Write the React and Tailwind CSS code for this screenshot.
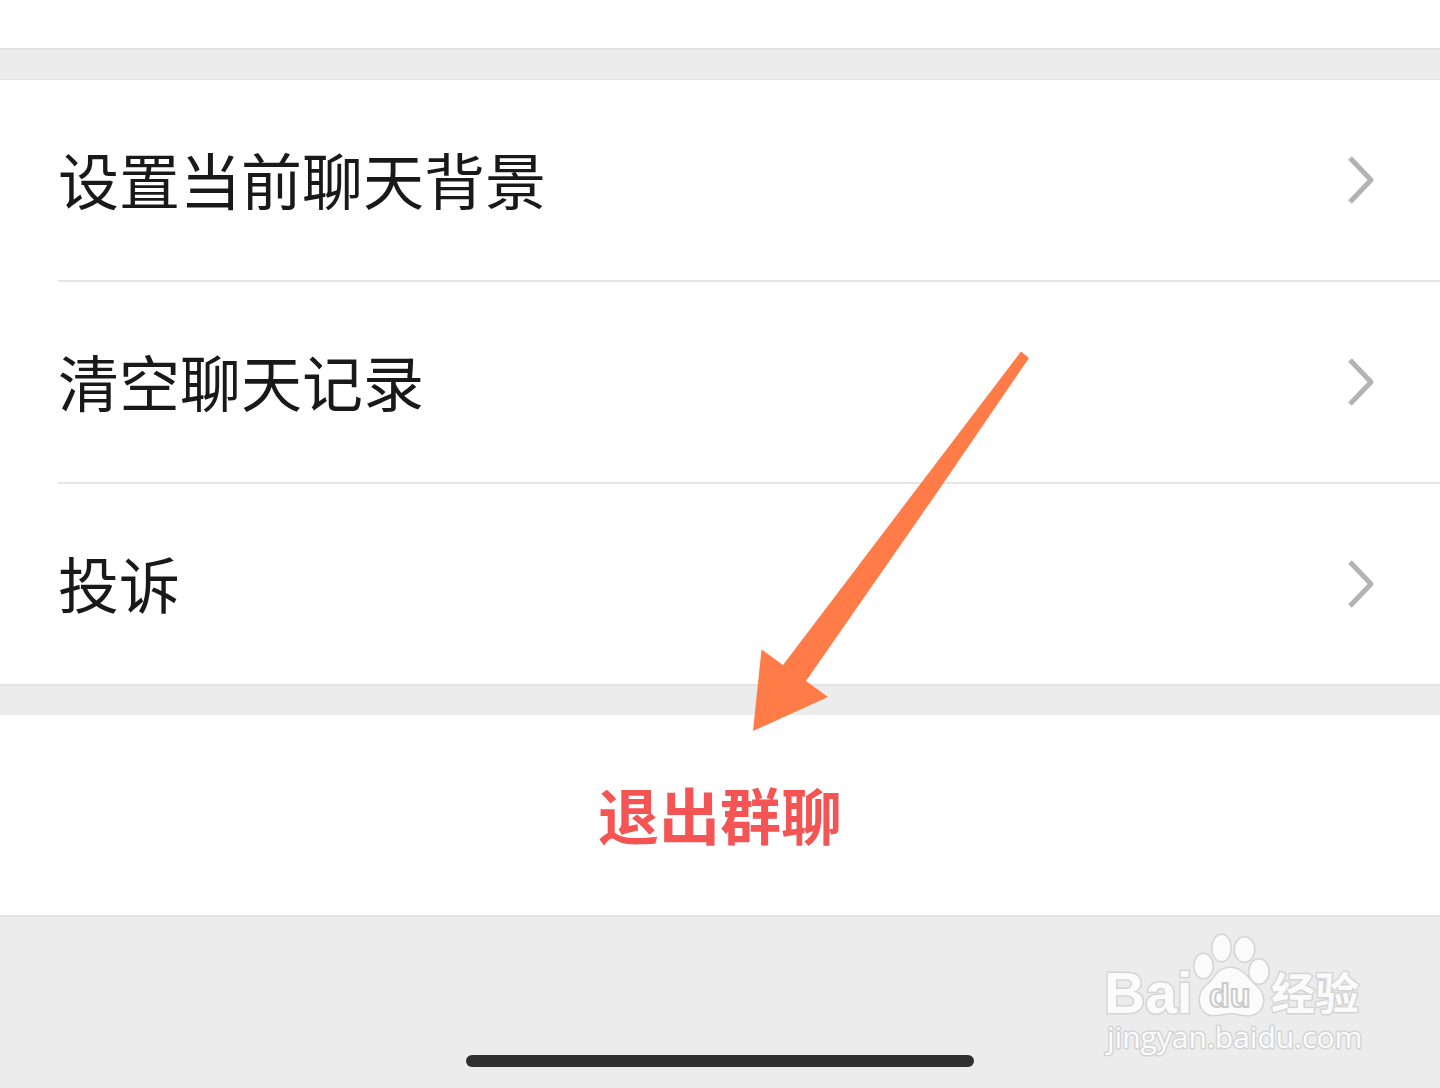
const settings = ["设置当前聊天背景", "清空聊天记录", "投诉"];

function Chevron() {
  return (
    <svg className="w-7 h-12 mr-[65px] shrink-0" viewBox="0 0 28 48" fill="none" aria-hidden="true">
      <path d="M3 2 L24 24 L3 46" stroke="#b3b3b3" strokeWidth="5" strokeLinejoin="round" />
    </svg>
  );
}

function SettingRow({ label, divider }) {
  return (
    <li className="pl-[58px]">
      <div className={divider ? "border-b-2 border-[#e5e5e5]" : ""}>
        <button type="button" className="w-full h-[200px] flex items-center justify-between text-left">
          <span className="pt-2 text-[61px] leading-[80px] text-[#191919]">{label}</span>
          <Chevron />
        </button>
      </div>
    </li>
  );
}

function Arrow() {
  return (
    <svg
      className="absolute left-1/2 top-[350px] ml-8 w-[280px] h-[384px] pointer-events-none"
      viewBox="752 350 280 384"
      aria-hidden="true"
    >
      <path
        d="M1021 351.500 L1029 358 L936 494 L806 681 L828 697 L753 731 L761.500 649.500 L783 665 L915 491 Z"
        fill="#ff7b47"
      />
    </svg>
  );
}

function Watermark() {
  return (
    <svg
      className="absolute right-[70px] bottom-[28px] w-[270px] h-[130px] pointer-events-none"
      viewBox="1100 930 270 130"
      role="img"
      aria-label="Baidu 经验"
    >
      <g fill="#fbfbfb" stroke="#d4d4d4" strokeWidth="3" paintOrder="stroke" strokeLinejoin="round">
        <ellipse cx="1203.500" cy="966" rx="9" ry="12" />
        <ellipse cx="1221.500" cy="948" rx="9" ry="13" />
        <ellipse cx="1244.500" cy="949.500" rx="9.500" ry="12" />
        <ellipse cx="1259" cy="971.500" rx="9.500" ry="12" />
        <path d="M1230 968 C1223 968 1218 972 1214 978 C1209 985 1200 988 1200 1000 C1200 1009 1206 1015 1214 1015 C1220 1015 1225 1013 1231 1013 C1237 1013 1243 1016 1250 1015 C1258 1014 1263 1008 1263 1000 C1263 990 1255 986 1250 980 C1244 973 1239 968 1230 968 Z" />
        <text x="1104" y="1013" fontSize="57" fontWeight="700" fontFamily="'Liberation Sans', sans-serif">
          Bai
        </text>
        <text x="1107" y="1048" fontSize="30" fontFamily="'Open Sans', sans-serif">
          jingyan.baidu.com
        </text>
        <text x="1271" y="1010" fontSize="44" fontWeight="700" fontFamily="'Noto Sans CJK SC', sans-serif">
          经验
        </text>
      </g>
      <text
        x="1209"
        y="1007"
        fontSize="34"
        fontWeight="700"
        fontFamily="'Liberation Sans', sans-serif"
        fill="#fbfbfb"
        stroke="#cbcbcb"
        strokeWidth="2"
      >
        du
      </text>
    </svg>
  );
}

export default function App() {
  return (
    <main className="relative min-h-screen flex flex-col bg-[#ececec] font-['Liberation_Sans','Noto_Sans_CJK_SC',sans-serif]">
      <div className="h-[50px] bg-white border-b-2 border-[#e2e2e2]" />

      <ul className="mt-[29px] bg-white border-t border-b-2 border-[#e2e2e2]">
        {settings.map((label, i) => (
          <SettingRow key={label} label={label} divider={i < settings.length - 1} />
        ))}
      </ul>

      <button
        type="button"
        className="mt-[29px] h-[202px] pt-2 bg-white border-b-2 border-[#e2e2e2] text-[61px] leading-[80px] font-bold text-[#f45454]"
      >
        退出群聊
      </button>

      <div className="mt-auto mb-[21px] self-center w-[508px] h-3 rounded-full bg-[#2f2f2f]" />

      <Arrow />
      <Watermark />
    </main>
  );
}
